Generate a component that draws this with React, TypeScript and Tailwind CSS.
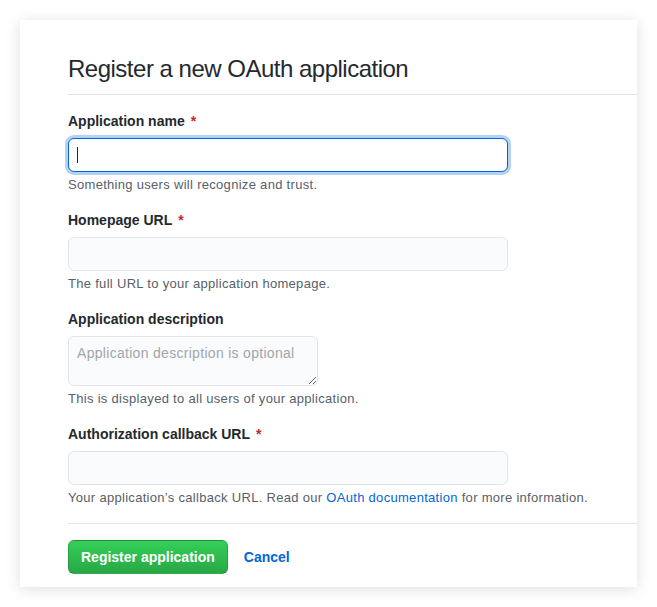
import { ReactNode } from "react";

const font = { fontFamily: '"Liberation Sans", Arial, sans-serif' };

function Field({
  label,
  required,
  note,
  children,
}: {
  label: string;
  required?: boolean;
  note: ReactNode;
  children: ReactNode;
}) {
  return (
    <dl className="mb-4">
      <dt className="mb-[6px] text-[14px] font-bold leading-[21px] text-[#24292e]">
        <label>
          {label}
          {required && <span className="ml-[6px] text-[#cb2431]">*</span>}
        </label>
      </dt>
      <dd>
        {children}
        <p className="mt-1 text-[13px] leading-[18px] tracking-[0.3px] text-[#586069]">{note}</p>
      </dd>
    </dl>
  );
}

const inputBase =
  "block h-[34px] w-[440px] rounded-[6px] border px-2 text-[14px] leading-5 text-[#24292e] outline-none";

export default function App() {
  return (
    <div className="min-h-[607px] w-[657px] bg-white p-[20px]" style={font}>
      <div className="w-[617px] bg-white pb-[13px] pl-[48px] pt-[31px] shadow-[0_2px_14px_rgba(0,0,0,0.13)]">
        <div className="mb-4 border-b border-[#e1e4e8] pb-[7px]">
          <h2 className="text-[24px] font-normal leading-[36px] tracking-[-0.5px] text-[#24292e]">
            Register a new OAuth application
          </h2>
        </div>

        <form>
          <Field label="Application name" required note="Something users will recognize and trust.">
            <div className="relative w-[440px]">
              <input
                className={`${inputBase} border-[#0366d6] bg-white shadow-[0_0_0_3px_rgba(3,102,214,0.3)] caret-transparent`}
              />
              {/* static text caret, as in the focused field of the screenshot */}
              <span className="pointer-events-none absolute left-[9px] top-[9px] h-[16px] w-px bg-[#24292e]" />
            </div>
          </Field>

          <Field label="Homepage URL" required note="The full URL to your application homepage.">
            <input className={`${inputBase} border-[#e1e4e8] bg-[#fafbfc]`} />
          </Field>

          <Field label="Application description" note="This is displayed to all users of your application.">
            <textarea
              placeholder="Application description is optional"
              className="block h-[50px] w-[250px] rounded-[6px] border border-[#e1e4e8] bg-[#fafbfc] px-2 pb-[5px] pt-[6px] text-[14px] leading-5 tracking-[0.3px] text-[#24292e] outline-none placeholder:text-[#a0a6ad]"
            />
          </Field>

          <Field
            label="Authorization callback URL"
            required
            note={
              <>
                Your application’s callback URL. Read our{" "}
                <a className="text-[#0366d6]" href="#">
                  OAuth documentation
                </a>{" "}
                for more information.
              </>
            }
          >
            <input className={`${inputBase} border-[#e1e4e8] bg-[#fafbfc]`} />
          </Field>

          <div className="mt-[15px] border-t border-[#e1e4e8] pt-4">
            <div className="flex items-center">
              <button
                type="button"
                className="h-[34px] rounded-[6px] border border-[rgba(27,31,35,0.2)] bg-gradient-to-b from-[#34d058] to-[#28a745] px-3 text-[14px] font-bold leading-5 text-white"
              >
                Register application
              </button>
              <a href="#" className="ml-4 text-[14px] font-bold text-[#0366d6]">
                Cancel
              </a>
            </div>
          </div>
        </form>
      </div>
    </div>
  );
}
